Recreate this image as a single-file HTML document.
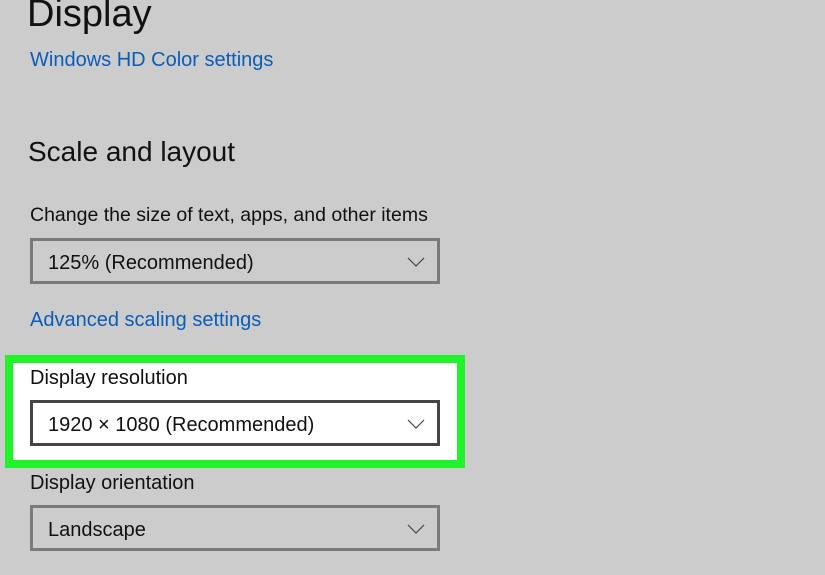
<!DOCTYPE html><html><head><style>
body{margin:0;width:825px;height:575px;background:#cccccc;position:relative;overflow:hidden;font-family:"Liberation Sans",sans-serif;color:#111}
.t{position:absolute;white-space:nowrap}
.dd{position:absolute;left:30px;width:404px;height:40px;border:3px solid #7a7a7a;box-sizing:content-box}
.dd span{position:absolute;left:15px;top:11px;font-size:20px}
.dd svg{position:absolute;right:12px;top:16px}
</style></head><body>
<div class="t" style="left:27px;top:-7px;font-size:38px">Display</div>
<div class="t" style="left:30px;top:49px;font-size:20px;color:#0a5db8">Windows HD Color settings</div>
<div class="t" style="left:28px;top:136px;font-size:28px">Scale and layout</div>
<div class="t" style="left:30px;top:204px;font-size:19.5px">Change the size of text, apps, and other items</div>
<div class="dd" style="top:238px"><span>125% (Recommended)</span><svg width="18" height="10"><path d="M1 1l8 8 8-8" fill="none" stroke="#444" stroke-width="1.2"/></svg></div>
<div class="t" style="left:30px;top:309px;font-size:20px;color:#0a5db8">Advanced scaling settings</div>
<div style="position:absolute;left:5px;top:355px;width:444px;height:97px;border:8px solid #22f22a;background:#fff"></div>
<div class="t" style="left:30px;top:367px;font-size:20px">Display resolution</div>
<div class="dd" style="top:400px;border-color:#444;background:#fff"><span>1920 × 1080 (Recommended)</span><svg width="18" height="10"><path d="M1 1l8 8 8-8" fill="none" stroke="#444" stroke-width="1.2"/></svg></div>
<div class="t" style="left:30px;top:472px;font-size:20px">Display orientation</div>
<div class="dd" style="top:505px"><span>Landscape</span><svg width="18" height="10"><path d="M1 1l8 8 8-8" fill="none" stroke="#444" stroke-width="1.2"/></svg></div>
</body></html>
